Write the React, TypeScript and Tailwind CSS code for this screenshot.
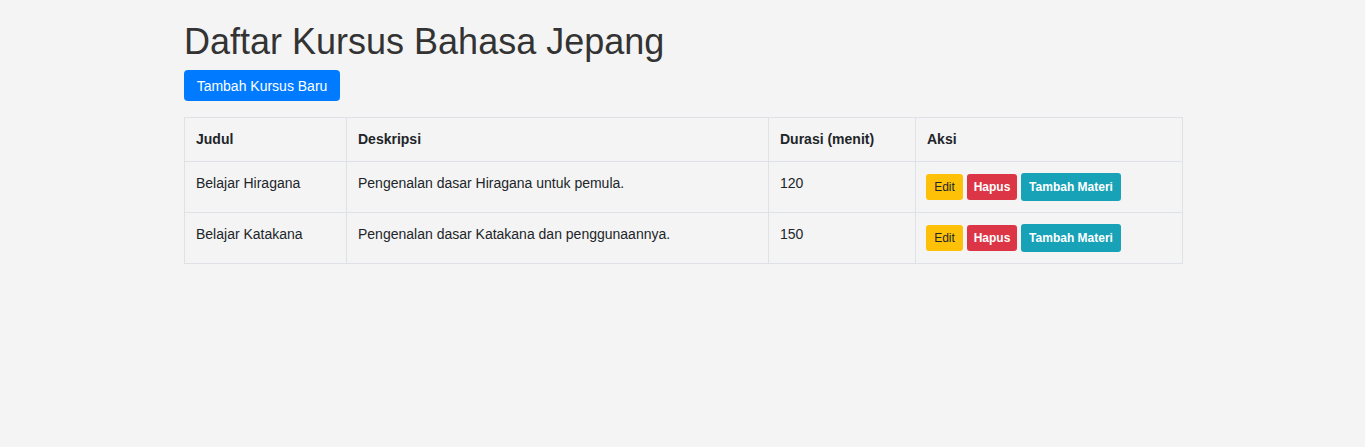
import React from 'react';

type Kursus = {
  id: number;
  judul: string;
  deskripsi: string;
  durasi: number;
};

const kursus: Kursus[] = [
  { id: 1, judul: 'Belajar Hiragana', deskripsi: 'Pengenalan dasar Hiragana untuk pemula.', durasi: 120 },
  { id: 2, judul: 'Belajar Katakana', deskripsi: 'Pengenalan dasar Katakana dan penggunaannya.', durasi: 150 },
];

export default function App() {
  return (
    <main
      className="min-h-[447px] bg-[#f4f4f4] pt-[20px] text-[#212529]"
      style={{ fontFamily: '"Liberation Sans", Arial, sans-serif' }}
    >
      <div className="ml-[184px] w-[999px]">
        <h1 className="mb-[7px] text-[36px] leading-[43px] font-normal text-[#333]">Daftar Kursus Bahasa Jepang</h1>

        <button className="h-[31px] w-[156px] rounded-[4px] bg-[#007bff] text-[14px] leading-[20px] text-white">
          Tambah Kursus Baru
        </button>

        <table className="mt-[16px] w-[999px] table-fixed border-collapse text-[14px] leading-[21px]">
          <thead>
            <tr>
              <th className="w-[162px] border border-[#dee2e6] px-[11px] py-[11px] text-left font-bold">Judul</th>
              <th className="w-[422px] border border-[#dee2e6] px-[11px] py-[11px] text-left font-bold">Deskripsi</th>
              <th className="w-[147px] border border-[#dee2e6] px-[11px] py-[11px] text-left font-bold">Durasi (menit)</th>
              <th className="border border-[#dee2e6] px-[11px] py-[11px] text-left font-bold">Aksi</th>
            </tr>
          </thead>
          <tbody>
            {kursus.map((k) => (
              <tr key={k.id}>
                <td className="border border-[#dee2e6] px-[11px] py-[11px] align-top">{k.judul}</td>
                <td className="border border-[#dee2e6] px-[11px] py-[11px] align-top">{k.deskripsi}</td>
                <td className="border border-[#dee2e6] px-[11px] py-[11px] align-top">{k.durasi}</td>
                <td className="border border-[#dee2e6] px-[10px] py-[11px] align-top">
                  <div className="flex h-[28px] items-center gap-[4px]">
                    <button className="h-[26px] w-[37px] rounded-[3px] bg-[#ffc107] text-[12px] text-[#212529]">Edit</button>
                    <button className="h-[26px] w-[50px] rounded-[3px] bg-[#dc3545] text-[12px] font-bold text-white">Hapus</button>
                    <button className="h-[28px] w-[100px] rounded-[3px] bg-[#17a2b8] text-[12px] font-bold text-white">
                      Tambah Materi
                    </button>
                  </div>
                </td>
              </tr>
            ))}
          </tbody>
        </table>
      </div>
    </main>
  );
}
